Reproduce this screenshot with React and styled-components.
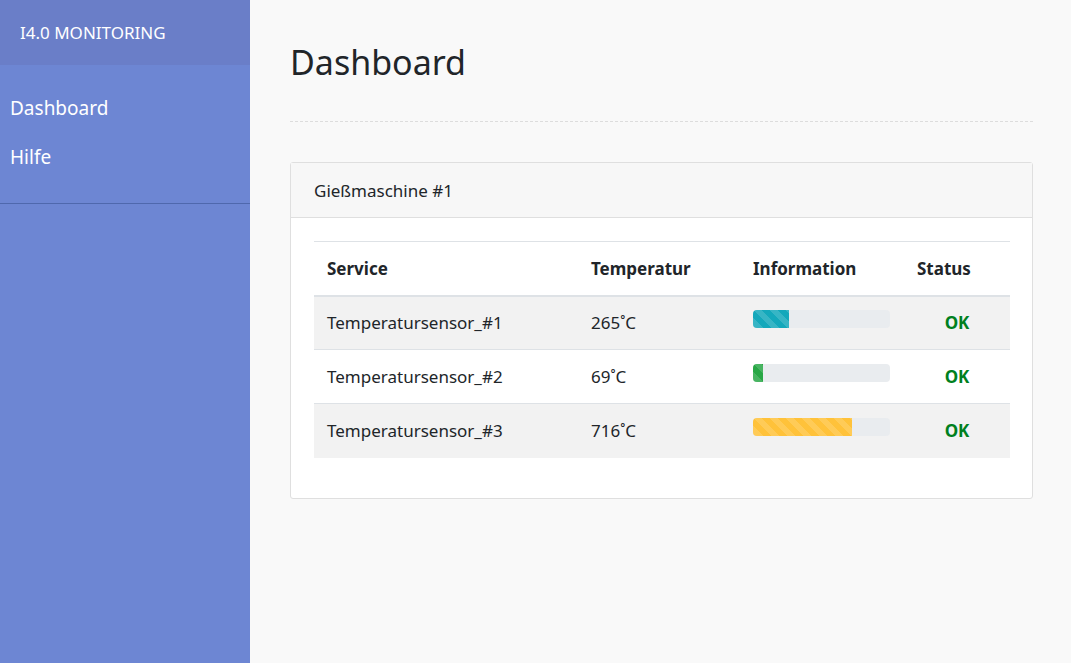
import React from "react"
import styled, { createGlobalStyle } from "styled-components"

const GlobalStyle = createGlobalStyle`
  *, *::before, *::after {
    box-sizing: border-box;
  }
  html, body {
    margin: 0;
    padding: 0;
    height: 100%;
    font-family: "Noto Sans", "Open Sans", sans-serif;
    color: #212529;
    background: #f9f9f9;
  }
  #root {
    height: 100%;
  }
`

const Layout = styled.div`
  display: flex;
  min-height: 663px;
`

const Sidebar = styled.aside`
  width: 250px;
  flex-shrink: 0;
  background: #6d86d3;
  color: #fff;
`

const Brand = styled.div`
  height: 65px;
  display: flex;
  align-items: center;
  padding-left: 20px;
  background: #6a7ec8;
  font-size: 17px;
  text-transform: uppercase;
`

const Nav = styled.nav`
  display: flex;
  flex-direction: column;
  padding: 19px 0 21px;
  border-bottom: 1px solid #4f68ad;
`

const NavItem = styled.a`
  display: block;
  padding: 8px 10px;
  font-size: 19px;
  line-height: 33px;
  color: #fff;
  text-decoration: none;
`

const Main = styled.main`
  flex: 1;
  padding: 32px 38px 0 40px;
`

const Title = styled.h1`
  margin: 0;
  padding: 7px 0 36px;
  font-size: 34px;
  font-weight: 400;
  line-height: 46px;
  border-bottom: 1px dashed #dddddd;
`

const Card = styled.section`
  margin-top: 40px;
  background: #fff;
  border: 1px solid #dfdfdf;
  border-radius: 3px;
`

const CardHeader = styled.header`
  height: 55px;
  display: flex;
  align-items: center;
  padding: 0 23px;
  background: #f7f7f7;
  border-bottom: 1px solid #dfdfdf;
  font-size: 17px;
`

const CardBody = styled.div`
  padding: 23px 22px 40px 23px;
`

const Table = styled.table`
  width: 100%;
  table-layout: fixed;
  border-collapse: collapse;
  font-size: 17px;
  border-top: 1px solid #dee2e6;
`

const Th = styled.th`
  text-align: left;
  font-weight: 700;
  padding: 0 13px;
  height: 54px;
  border-bottom: 2px solid #dee2e6;
  width: ${({ $w }) => $w || "auto"};
`

const Row = styled.tr`
  background: ${({ $striped }) => ($striped ? "#f2f2f2" : "#fff")};
  & + & {
    border-top: 1px solid #dee2e6;
  }
`

const Td = styled.td`
  padding: 0 13px;
  height: 54px;
  text-align: ${({ $center }) => ($center ? "center" : "left")};
`

const Progress = styled.div`
  height: 18px;
  width: 137px;
  background: #e9ecef;
  border-radius: 4px;
  overflow: hidden;
  margin: -4px 0 4px;
`

const Bar = styled.div`
  height: 100%;
  background-color: ${({ $color }) => $color};
  background-image: linear-gradient(
    45deg,
    rgba(255, 255, 255, 0.15) 25%,
    transparent 25%,
    transparent 50%,
    rgba(255, 255, 255, 0.15) 50%,
    rgba(255, 255, 255, 0.15) 75%,
    transparent 75%,
    transparent
  );
  background-size: 16px 16px;
`

const Ok = styled.span`
  color: #008020;
  font-weight: 700;
`

const rows = [
  { name: "Temperatursensor_#1", temp: "265˚C", pct: 26, color: "#14a8bb" },
  { name: "Temperatursensor_#2", temp: "69˚C", pct: 7, color: "#28a745" },
  { name: "Temperatursensor_#3", temp: "716˚C", pct: 72, color: "#ffc23a" },
]

const App = () => {
  return (
    <>
      <GlobalStyle />
      <Layout>
        <Sidebar>
          <Brand>I4.0 Monitoring</Brand>
          <Nav>
            <NavItem href="#">Dashboard</NavItem>
            <NavItem href="#">Hilfe</NavItem>
          </Nav>
        </Sidebar>
        <Main>
          <Title>Dashboard</Title>
          <Card>
            <CardHeader>Gießmaschine #1</CardHeader>
            <CardBody>
              <Table>
                <thead>
                  <tr>
                    <Th $w="264px">Service</Th>
                    <Th $w="162px">Temperatur</Th>
                    <Th $w="164px">Information</Th>
                    <Th>Status</Th>
                  </tr>
                </thead>
                <tbody>
                  {rows.map((r, i) => (
                    <Row key={r.name} $striped={i % 2 === 0}>
                      <Td>{r.name}</Td>
                      <Td>{r.temp}</Td>
                      <Td>
                        <Progress>
                          <Bar
                            $color={r.color}
                            style={{ width: `${r.pct}%` }}
                          />
                        </Progress>
                      </Td>
                      <Td $center>
                        <Ok>OK</Ok>
                      </Td>
                    </Row>
                  ))}
                </tbody>
              </Table>
            </CardBody>
          </Card>
        </Main>
      </Layout>
    </>
  )
}

export default App
